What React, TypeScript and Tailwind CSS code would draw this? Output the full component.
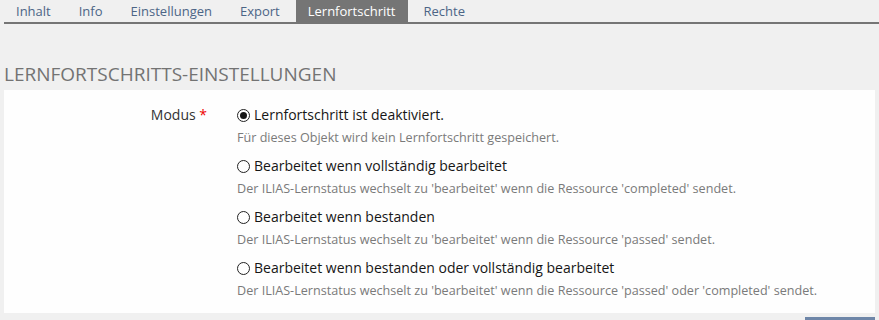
import React from "react";

const tabs = ["Inhalt", "Info", "Einstellungen", "Export", "Lernfortschritt", "Rechte"];

const options = [
  {
    title: "Lernfortschritt ist deaktiviert.",
    desc: "Für dieses Objekt wird kein Lernfortschritt gespeichert.",
    checked: true,
  },
  {
    title: "Bearbeitet wenn vollständig bearbeitet",
    desc: "Der ILIAS-Lernstatus wechselt zu 'bearbeitet' wenn die Ressource 'completed' sendet.",
    checked: false,
  },
  {
    title: "Bearbeitet wenn bestanden",
    desc: "Der ILIAS-Lernstatus wechselt zu 'bearbeitet' wenn die Ressource 'passed' sendet.",
    checked: false,
  },
  {
    title: "Bearbeitet wenn bestanden oder vollständig bearbeitet",
    desc: "Der ILIAS-Lernstatus wechselt zu 'bearbeitet' wenn die Ressource 'passed' oder 'completed' sendet.",
    checked: false,
  },
];

function Radio({ checked }: { checked: boolean }) {
  return (
    <span className="w-[13px] h-[13px] rounded-full border border-[#222] flex items-center justify-center shrink-0 bg-white">
      {checked && <span className="w-[7px] h-[7px] rounded-full bg-[#161616]" />}
    </span>
  );
}

export default function App() {
  return (
    <div
      className="w-[879px] h-[320px] bg-[#f0f0f0] overflow-hidden"
      style={{ fontFamily: '"Open Sans", "Noto Sans", sans-serif' }}
    >
      <div className="ml-[4px] flex border-b-2 border-[#757575] h-[24px]">
        {tabs.map((t) => (
          <div
            key={t}
            className={
              "mr-[4px] px-[12px] h-[22px] leading-[22px] text-[13px] " +
              (t === "Lernfortschritt" ? "bg-[#757575] text-white" : "text-[#4c6586]")
            }
          >
            {t}
          </div>
        ))}
      </div>
      <h2 className="mt-[38px] ml-[4px] text-[19px] leading-[24px] text-[#737373] uppercase font-normal">
        Lernfortschritts-Einstellungen
      </h2>
      <div className="mt-[4px] ml-[4px] w-[871px] bg-[#fefefe] pt-[15px] pb-[14px] flex">
        <div className="w-[218px] pr-[15px] text-right text-[14px] leading-[20px] text-[#333]">
          Modus <span className="text-[#e00]">*</span>
        </div>
        <div className="pl-[15px] flex flex-col">
          {options.map((o, i) => (
            <div key={i} className="flex flex-col mb-[10px] last:mb-0">
              <div className="flex items-center gap-[4px] text-[14px] leading-[20px] text-[#161616]">
                <Radio checked={o.checked} />
                <span>{o.title}</span>
              </div>
              <div className="mt-[5px] text-[12.6px] leading-[16px] text-[#7a7a7a]">{o.desc}</div>
            </div>
          ))}
        </div>
      </div>
      <div className="flex justify-end mr-[4px] mt-[4px]">
        <div className="w-[70px] h-[10px] bg-[#6e86a8]" />
      </div>
    </div>
  );
}
